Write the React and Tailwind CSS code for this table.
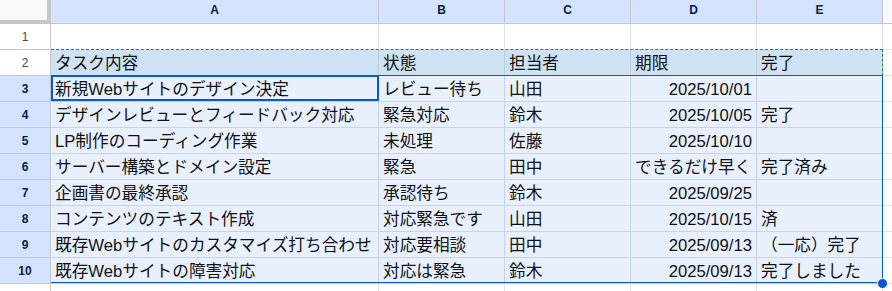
import React from 'react';

const FONT = { fontFamily: '"Liberation Sans", Arial, "Noto Sans CJK JP", sans-serif' };

const COLS = ['A', 'B', 'C', 'D', 'E'];
const WIDTHS = ['w-[328px]', 'w-[126px]', 'w-[126px]', 'w-[126px]', 'w-[126px]'];

const ROWS = [
  ['', '', '', '', ''],
  ['タスク内容', '状態', '担当者', '期限', '完了'],
  ['新規Webサイトのデザイン決定', 'レビュー待ち', '山田', '2025/10/01', ''],
  ['デザインレビューとフィードバック対応', '緊急対応', '鈴木', '2025/10/05', '完了'],
  ['LP制作のコーディング作業', '未処理', '佐藤', '2025/10/10', ''],
  ['サーバー構築とドメイン設定', '緊急', '田中', 'できるだけ早く', '完了済み'],
  ['企画書の最終承認', '承認待ち', '鈴木', '2025/09/25', ''],
  ['コンテンツのテキスト作成', '対応緊急です', '山田', '2025/10/15', '済'],
  ['既存Webサイトのカスタマイズ打ち合わせ', '対応要相談', '田中', '2025/09/13', '（一応）完了'],
  ['既存Webサイトの障害対応', '対応は緊急', '鈴木', '2025/09/13', '完了しました'],
  ['', '', '', '', ''],
];

const isDate = (v) => /^\d{4}\/\d{2}\/\d{2}$/.test(v);

function Cell({ value, width, tone }) {
  const toneCls =
    tone === 'sel'
      ? 'bg-[#e8f0fe] border-[#c6d3ea]'
      : tone === 'head'
      ? 'bg-[#cfe2f3] border-[#bccddd]'
      : 'bg-white border-[#e1e3e1]';
  return (
    <div
      className={`${width} h-[26px] shrink-0 border-r border-b ${toneCls} flex items-end pb-[2px] px-[4px] overflow-hidden whitespace-nowrap text-[16.67px] leading-[19px] text-[#111] ${
        isDate(value) ? 'justify-end' : 'justify-start'
      }`}
    >
      {value}
    </div>
  );
}

export default function App() {
  return (
    <div className="relative w-[892px] h-[291px] overflow-hidden bg-white" style={FONT}>
      {/* column header */}
      <div className="flex h-[24px]">
        <div className="w-[51px] h-[24px] shrink-0 bg-[#f8f9fa] border-r-4 border-b-4 border-[#c4c7c5]" />
        {COLS.map((c, i) => (
          <div
            key={c}
            className={`${WIDTHS[i]} h-[24px] shrink-0 bg-[#d3e3fd] border-r border-b border-[#c4c7c5] flex items-center justify-center pb-[3px] text-[12px] font-bold text-[#041e49]`}
          >
            {c}
          </div>
        ))}
        <div className="flex-1 h-[24px] bg-[#f8f9fa] border-b border-[#c4c7c5]" />
      </div>

      {ROWS.map((row, r) => {
        const n = r + 1;
        const selected = n >= 3 && n <= 10;
        const tone = selected ? 'sel' : n === 2 ? 'head' : 'plain';
        return (
          <div key={n} className="flex h-[26px]">
            <div
              className={`w-[51px] h-[26px] shrink-0 border-r border-b border-[#c4c7c5] flex items-center justify-center text-[12px] ${
                selected ? 'bg-[#d3e3fd] font-bold text-[#041e49]' : 'bg-white text-[#444746]'
              }`}
            >
              {n}
            </div>
            {row.map((v, i) => (
              <Cell key={i} value={v} width={WIDTHS[i]} tone={tone} />
            ))}
            <div className="flex-1 h-[26px] bg-white border-b border-[#e1e3e1]" />
          </div>
        );
      })}

      {/* copy marquee around the header row */}
      <div className="absolute left-[51px] top-[49px] w-[832px] h-[27px] border-t border-r border-dashed border-[#1e8e3e]" />
      {/* selection range A3:E10 */}
      <div className="absolute left-[51px] top-[75px] w-[832px] h-[208px] border-t border-r border-b border-[#0b57d0]" />
      {/* active cell A3 */}
      <div className="absolute left-[51px] top-[75px] w-[328px] h-[26px] border-2 border-[#0b57d0]" />
      {/* fill handle */}
      <div className="absolute left-[877px] top-[278px] w-[11px] h-[11px] rounded-full bg-[#0b57d0] border border-white" />
    </div>
  );
}
